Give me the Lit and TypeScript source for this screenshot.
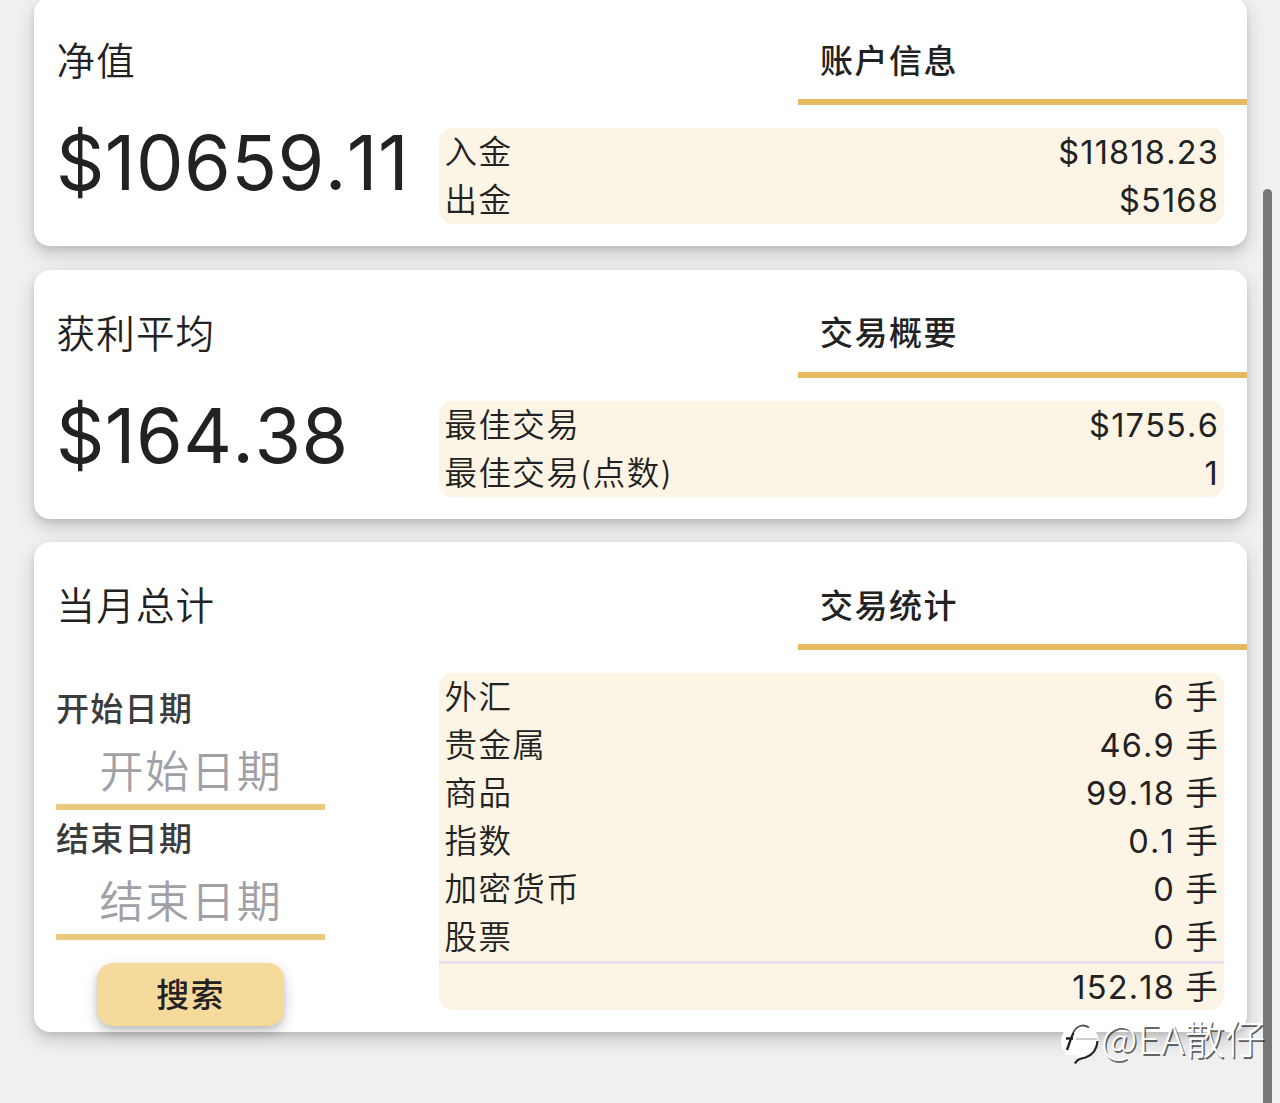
import { LitElement, html, css } from 'lit';
import { customElement, property } from 'lit/decorators.js';

interface Row {
  label: string;
  value: string;
}

@customElement('stat-card')
export class StatCard extends LitElement {
  @property() heading = '';
  @property() tab = '';
  @property({ attribute: false }) rows: Row[] = [];
  @property() total = '';

  static styles = css`
    :host {
      display: block;
      border-radius: 16px;
      background: #fff;
      box-shadow: 0 8px 18px rgba(0, 0, 0, 0.17), 0 3px 6px rgba(0, 0, 0, 0.09);
    }
    .header {
      display: flex;
      justify-content: space-between;
      height: 108px;
    }
    .heading {
      padding: 31px 0 0 22.5px;
      font-size: 38.5px;
      line-height: 66px;
      letter-spacing: 1.2px;
      font-weight: 350;
    }
    .tab {
      box-sizing: border-box;
      width: 449px;
      padding: 31.5px 22px 0;
      border-bottom: 6px solid #e4b95f;
      font-size: 33px;
      line-height: 64px;
      letter-spacing: 1.5px;
      font-weight: 500;
    }
    .body {
      display: flex;
    }
    .left {
      box-sizing: border-box;
      width: 405px;
      padding-left: 22px;
    }
    .panel {
      flex: 1;
      margin: 23px 23px 22px 0;
      border-radius: 14px;
      background: #fcf4e5;
      font-size: 32.5px;
      letter-spacing: 1.4px;
      font-kerning: none;
      font-weight: 350;
    }
    .row {
      display: flex;
      justify-content: space-between;
      height: 48px;
      padding: 0 5px 0 5.5px;
      line-height: 49px;
    }
    .value {
      font-weight: 400;
      letter-spacing: 1.2px;
    }
    .total {
      justify-content: flex-end;
      border-top: 3px solid #e3dfea;
      height: 46px;
      line-height: 47px;
    }
  `;

  render() {
    return html`
      <div class="header">
        <div class="heading">${this.heading}</div>
        <div class="tab">${this.tab}</div>
      </div>
      <div class="body">
        <div class="left"><slot></slot></div>
        <div class="panel">
          ${this.rows.map(
            (row) => html`
              <div class="row">
                <span>${row.label}</span>
                <span class="value">${row.value}</span>
              </div>
            `
          )}
          ${this.total
            ? html`<div class="row total"><span class="value">${this.total}</span></div>`
            : ''}
        </div>
      </div>
    `;
  }
}

@customElement('date-field')
export class DateField extends LitElement {
  @property() label = '';

  static styles = css`
    :host {
      display: block;
      width: 269px;
    }
    .label {
      display: block;
      font-size: 33px;
      line-height: 58px;
      letter-spacing: 1.3px;
      font-weight: 500;
      color: #3c3c3c;
    }
    .input {
      height: 66px;
      padding-left: 1px;
      border-bottom: 6px solid #ebca80;
      font-size: 44px;
      line-height: 69px;
      letter-spacing: 1.7px;
      font-weight: 350;
      text-align: center;
      color: #a0a0a6;
    }
  `;

  render() {
    return html`
      <span class="label">${this.label}</span>
      <div class="input">${this.label}</div>
    `;
  }
}

@customElement('app-root')
export class AppRoot extends LitElement {
  account: Row[] = [
    { label: '入金', value: '$11818.23' },
    { label: '出金', value: '$5168' },
  ];

  summary: Row[] = [
    { label: '最佳交易', value: '$1755.6' },
    { label: '最佳交易(点数)', value: '1' },
  ];

  stats: Row[] = [
    { label: '外汇', value: '6 手' },
    { label: '贵金属', value: '46.9 手' },
    { label: '商品', value: '99.18 手' },
    { label: '指数', value: '0.1 手' },
    { label: '加密货币', value: '0 手' },
    { label: '股票', value: '0 手' },
  ];

  static styles = css`
    :host {
      display: block;
      position: relative;
      box-sizing: border-box;
      height: 1103px;
      padding: 0 33px 0 34px;
      overflow: hidden;
      background: #f0f0f0;
      color: #222;
      font-family: Inter, 'Noto Sans CJK SC', sans-serif;
    }
    .cards {
      display: flex;
      flex-direction: column;
      gap: 23.3px;
      margin-top: -2.6px;
    }
    .amount {
      padding: 18px 0 0 0;
      font-size: 75.5px;
      line-height: 80px;
      letter-spacing: 0.4px;
      font-kerning: none;
      white-space: nowrap;
    }
    .form {
      padding-top: 30px;
      width: 269px;
    }
    .search {
      display: block;
      width: 187px;
      height: 63px;
      margin: 23px auto 0;
      padding: 0 0 3px;
      border: 0;
      border-radius: 16px;
      background: #f6da9b;
      box-shadow: 0 6px 14px rgba(0, 0, 0, 0.22), 0 2px 4px rgba(0, 0, 0, 0.08);
      color: #222;
      font: 500 33px Inter, 'Noto Sans CJK SC', sans-serif;
      letter-spacing: 1.3px;
    }
    .scrollbar {
      position: absolute;
      top: 189px;
      right: 8px;
      bottom: -10px;
      width: 9px;
      border-radius: 5px;
      background: #777;
    }
    .watermark {
      position: absolute;
      left: 1060px;
      top: 1007px;
      display: flex;
      align-items: center;
      color: #fff;
      font-size: 40px;
      line-height: 60px;
      font-weight: 300;
      font-family: 'Noto Sans CJK SC', sans-serif;
      letter-spacing: 0.3px;
      text-shadow: 1.5px 1.5px 0.5px rgba(0, 0, 0, 0.6);
      white-space: nowrap;
    }
    .logo {
      width: 40px;
      height: 44px;
      margin: 16px 1px 0 0;
    }
  `;

  render() {
    return html`
      <div class="cards">
        <stat-card heading="净值" tab="账户信息" .rows=${this.account}>
          <div class="amount">$10659.11</div>
        </stat-card>
        <stat-card heading="获利平均" tab="交易概要" .rows=${this.summary}>
          <div class="amount">$164.38</div>
        </stat-card>
        <stat-card heading="当月总计" tab="交易统计" .rows=${this.stats} total="152.18 手">
          <div class="form">
            <date-field label="开始日期"></date-field>
            <date-field label="结束日期"></date-field>
            <button class="search">搜索</button>
          </div>
        </stat-card>
      </div>
      <div class="scrollbar"></div>
      <div class="watermark">
        <svg class="logo" viewBox="0 0 40 44">
          <path
            d="M19 1C8 2 1 10 1 18c0 6 3 11 6 14l11 0-2 6c11-3 20-8 22-17 2-9-4-21-19-20z"
            fill="#fff"
          />
          <path
            d="M13 10C15 6 17 4 20 3c3-1 6-.5 9 1.500"
            fill="none"
            stroke="#555"
            stroke-width="1.800"
          />
          <path d="M7 27c2-5 3-11 6.500-17M6 15.500h7" fill="none" stroke="#222" stroke-width="2.400" />
          <path d="M16 16h21" stroke="#aaa" stroke-width="1.200" />
          <path
            d="M37.500 18c-.5 8-5 14-12 16.500-5 1.500-8 1-10.500 6"
            fill="none"
            stroke="#222"
            stroke-width="2.200"
          />
        </svg>
        <span>@EA散仔</span>
      </div>
    `;
  }
}
